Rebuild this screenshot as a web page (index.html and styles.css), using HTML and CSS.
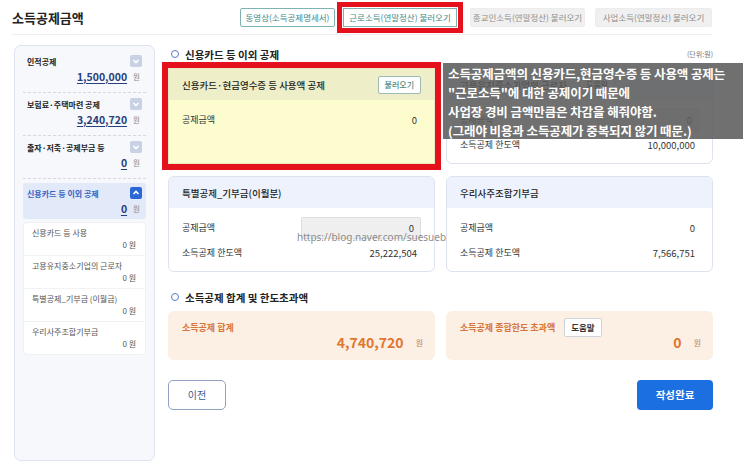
FILE: index.html
```html
<!doctype html>
<html>
<head>
<meta charset="UTF-8">
<title>소득공제금액</title>
<link rel="stylesheet" href="styles.css">
</head>
<body>
<div class="page">
	<div class="top">
		<h1>소득공제금액</h1>
		<div class="top-btns">
			<a class="tbtn teal b1" href="javascript:void(0);">동영상(소득공제명세서)</a>
			<a class="tbtn teal mark b2" href="javascript:void(0);">근로소득(연말정산) 불러오기</a>
			<a class="tbtn gray b3" href="javascript:void(0);">종교인소득(연말정산) 불러오기</a>
			<a class="tbtn gray b4" href="javascript:void(0);">사업소득(연말정산) 불러오기</a>
		</div>
	</div>
	<div class="wrap">
		<!-- 왼쪽 메뉴 -->
		<div class="side">
			<div class="s-item">
				<div class="s-hd"><span>인적공제</span><i class="chev"><svg viewBox="0 0 12 12"><path d="M3.5 5l2.5 2.5L8.5 5"/></svg></i></div>
				<div class="s-val"><b>1,500,000</b><span>원</span></div>
			</div>
			<div class="s-item">
				<div class="s-hd"><span>보험료·주택마련 공제</span><i class="chev"><svg viewBox="0 0 12 12"><path d="M3.5 5l2.5 2.5L8.5 5"/></svg></i></div>
				<div class="s-val"><b>3,240,720</b><span>원</span></div>
			</div>
			<div class="s-item">
				<div class="s-hd"><span>출자·저축·공제부금 등</span><i class="chev"><svg viewBox="0 0 12 12"><path d="M3.5 5l2.5 2.5L8.5 5"/></svg></i></div>
				<div class="s-val"><b>0</b><span>원</span></div>
			</div>
			<div class="s-item on">
				<div class="s-hd"><span>신용카드 등 이외 공제</span><i class="chev"><svg viewBox="0 0 12 12"><path d="M3.5 7l2.5-2.5L8.5 7"/></svg></i></div>
				<div class="s-val"><b>0</b><span>원</span></div>
			</div>
			<ul class="s-sub">
				<li><p>신용카드 등 사용</p><div>0 원</div></li>
				<li><p>고용유지중소기업의 근로자</p><div>0 원</div></li>
				<li><p>특별공제_기부금 (이월금)</p><div>0 원</div></li>
				<li><p>우리사주조합기부금</p><div>0 원</div></li>
			</ul>
		</div>
		<!-- 본문 -->
		<div class="main">
			<div class="tit"><h2>신용카드 등 이외 공제</h2><span class="unit">(단위:원)</span></div>
			<div class="cards">
				<div class="card yellow">
					<div class="card-hd">신용카드·현금영수증 등 사용액 공제<a class="sbtn load" href="javascript:void(0);">불러오기</a></div>
					<div class="card-bd">
						<div class="row"><span>공제금액</span><span>0</span></div>
					</div>
				</div>
				<div class="card">
					<div class="card-hd">고용유지중소기업의 근로자<a class="sbtn" href="javascript:void(0);">도움말</a></div>
					<div class="card-bd">
						<div class="row"><span>공제금액</span><span class="ipt">0</span></div>
						<div class="row"><span>소득공제 한도액</span><span>10,000,000</span></div>
					</div>
				</div>
				<div class="card">
					<div class="card-hd">특별공제_기부금(이월분)</div>
					<div class="card-bd">
						<div class="row"><span>공제금액</span><span class="ipt">0</span></div>
						<div class="row"><span>소득공제 한도액</span><span>25,222,504</span></div>
					</div>
				</div>
				<div class="card">
					<div class="card-hd">우리사주조합기부금</div>
					<div class="card-bd">
						<div class="row"><span>공제금액</span><span>0</span></div>
						<div class="row"><span>소득공제 한도액</span><span>7,566,751</span></div>
					</div>
				</div>
			</div>
			<div class="tit tit2"><h2>소득공제 합계 및 한도초과액</h2></div>
			<div class="sums">
				<div class="sum">
					<div class="sum-hd">소득공제 합계</div>
					<div class="sum-val"><b>4,740,720</b><span>원</span></div>
				</div>
				<div class="sum">
					<div class="sum-hd">소득공제 종합한도 초과액<a class="sbtn help" href="javascript:void(0);">도움말</a></div>
					<div class="sum-val"><b>0</b><span>원</span></div>
				</div>
			</div>
			<div class="btns">
				<a class="btn-prev" href="javascript:void(0);">이전</a>
				<a class="btn-done" href="javascript:void(0);">작성완료</a>
			</div>
		</div>
	</div>
	<!-- 메모 / 워터마크 -->
	<div class="note">
		소득공제금액의 신용카드,현금영수증 등 사용액 공제는<br>
		"근로소득"에 대한 공제이기 때문에<br>
		사업장 경비 금액만큼은 차감을 해줘야함.<br>
		(그래야 비용과 소득공제가 중복되지 않기 때문.)
	</div>
	<div class="wm">https://blog.naver.com/suesueb</div>
</div>
</body>
</html>
```

FILE: styles.css
```css
*{margin:0;padding:0;box-sizing:border-box;}
body{font-family:"Noto Sans CJK KR","Noto Sans",sans-serif;background:#fff;color:#222;}
ul,li{list-style:none;}
a{text-decoration:none;}
.page{width:743px;height:472px;position:relative;overflow:hidden;}
/*top start*/
.top{height:35px;margin:0 31px 0 12px;border-bottom:1px solid #eee;display:flex;align-items:center;justify-content:space-between;}
.top h1{font-size:13px;font-weight:700;color:#222;}
.top-btns{display:flex;}
.tbtn{display:block;height:19px;line-height:17px;text-align:center;font-size:8.5px;border:1px solid transparent;border-radius:2px;white-space:nowrap;}
.tbtn.teal{border-color:#7fb3b3;color:#3d8b8b;background:#fff;}
.tbtn.gray{background:#f0f0f0;border-color:#ececec;color:#8e8e8e;}
.tbtn.mark{outline:5px solid #e5121e;outline-offset:1px;border-radius:0;}
.b1{width:95px;}
.b2{width:114px;margin-left:8px;}
.b3{width:115px;margin-left:13px;}
.b4{width:117px;margin-left:10px;}
/*top end*/
.wrap{display:flex;gap:13px;margin-top:10px;padding:0 30px 0 14px;}
/*side start*/
.side{width:141px;height:416px;flex:none;border:1px solid #dde3ee;border-radius:7px;background:#f6f8fc;padding:4px 8px;}
.s-item{padding:4px 4px 8px;border-bottom:1px dashed #d3d8e2;}
.s-hd{display:flex;justify-content:space-between;align-items:center;height:14px;font-size:8px;font-weight:700;color:#222;}
.chev{display:block;width:12px;height:12px;border-radius:2px;background:#c9d1e5;}
.chev svg{display:block;width:12px;height:12px;}
.chev path{fill:none;stroke:#fff;stroke-width:1.6;}
.s-val{display:flex;justify-content:flex-end;align-items:center;height:16px;padding-right:2px;}
.s-val b{font-size:10.5px;font-weight:700;color:#27407a;text-decoration:underline;text-underline-offset:2px;text-decoration-thickness:1px;}
.s-val span{font-size:7.5px;color:#888;margin-left:6px;}
.s-item.on{margin-top:4px;padding:3px 4px;border:0;border-radius:3px;background:#e2e9f8;}
.s-item.on .s-hd{color:#3264c4;}
.s-item.on .chev{background:#2b67d6;}
.s-sub{margin-top:3px;background:#fff;border:1px solid #eef0f4;border-radius:4px;}
.s-sub li{padding:4px 9px 4px 8px;border-bottom:1px solid #f1f2f5;}
.s-sub li:last-child{border-bottom:0;}
.s-sub p{height:12px;line-height:12px;font-size:8px;color:#555;}
.s-sub div{height:12px;line-height:12px;font-size:8px;color:#555;text-align:right;}
/*side end*/
/*main start*/
.main{flex:1;}
.tit{display:flex;justify-content:space-between;align-items:center;height:18px;margin-bottom:5px;}
.tit h2{font-size:10.5px;font-weight:700;color:#222;display:flex;align-items:center;}
.tit h2:before{content:"";width:6px;height:6px;border:1.5px solid #5a7ec0;border-radius:50%;margin:0 6px 0 3px;}
.tit .unit{font-size:7px;color:#777;}
.tit2{margin-top:16px;}
.cards{display:grid;grid-template-columns:1fr 1fr;gap:12px 11px;}
.card{border:1px solid #dde3ee;border-radius:6px;overflow:hidden;background:#fff;}
.card-hd{height:31px;padding:0 13px;background:#edf2fc;display:flex;align-items:center;gap:12px;font-size:9.5px;font-weight:500;color:#222;}
.card-bd{padding:7px 13px 6px;}
.row{display:flex;justify-content:space-between;align-items:center;height:25px;font-size:9px;color:#333;}
.row span:last-child{font-size:9.5px;padding-right:4px;}
.row .ipt{width:120px;height:22px;line-height:20px;background:#efefef;border:1px solid #ddd;border-radius:2px;text-align:right;padding-right:6px !important;}
.sbtn{display:block;height:18px;line-height:16px;padding:0 6px;font-size:8px;color:#333;background:#fff;border:1px solid #cfd3da;border-radius:2px;}
.card.yellow{outline:6px solid #e5121e;outline-offset:0;border-color:#e8e8c0;border-radius:0;}
.card.yellow .card-hd{background:#eeeec8;}
.card.yellow .card-bd{background:#fcfccf;height:63px;}
.card.yellow .load{margin-left:auto;color:#4f8a80;border-color:#9dbcb4;}
.sums{display:grid;grid-template-columns:1fr 1fr;gap:11px;}
.sum{height:49px;background:#fcefe4;border-radius:6px;padding:10px 12px 0 14px;}
.sum-hd{display:flex;align-items:center;gap:9px;height:12px;font-size:9px;font-weight:700;color:#d6763a;}
.sum-hd .help{margin:-3px 0;height:19px;line-height:17px;font-size:8.5px;}
.sum-val{display:flex;justify-content:flex-end;align-items:center;height:18px;}
.sum-val b{font-size:14px;font-weight:700;color:#e0762f;}
.sum-val span{font-size:8px;color:#b7845e;margin-left:12px;}
.btns{display:flex;justify-content:space-between;margin-top:20px;}
.btn-prev{width:58px;height:30px;line-height:28px;text-align:center;font-size:10px;color:#3a5a92;border:1px solid #8fa3c3;border-radius:5px;background:#fff;}
.btn-done{width:76px;height:30px;line-height:30px;text-align:center;font-size:10.5px;font-weight:700;color:#fff;background:#1c6fe0;border-radius:4px;}
/*main end*/
.note{position:absolute;left:443px;top:63px;width:300px;height:76px;padding:1px 0 0 5px;background:rgba(92,92,92,0.88);color:#fff;font-size:12.5px;font-weight:700;line-height:19px;letter-spacing:-0.1px;white-space:nowrap;}
.wm{position:absolute;left:297px;top:230px;font-family:"Noto Sans",sans-serif;font-size:10px;color:rgba(110,110,110,0.8);}
```
